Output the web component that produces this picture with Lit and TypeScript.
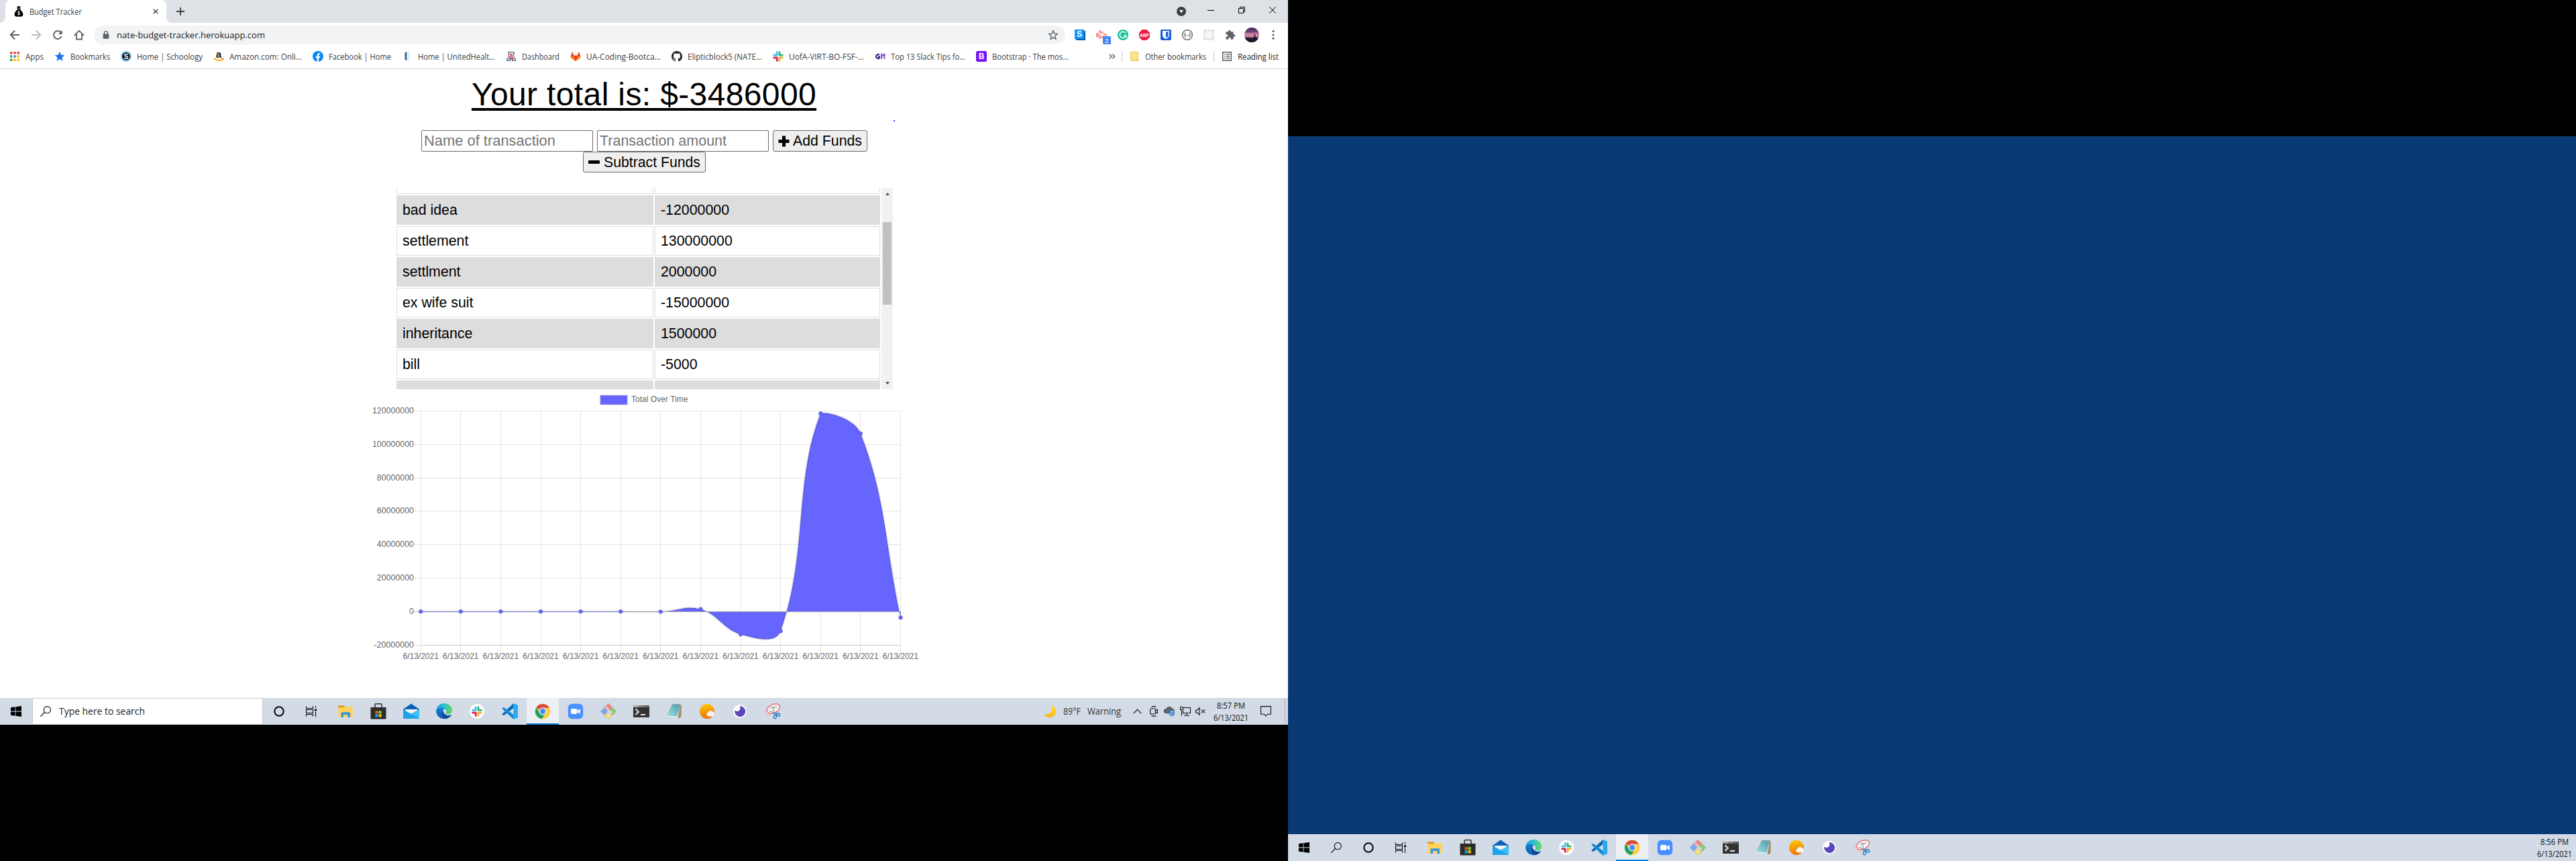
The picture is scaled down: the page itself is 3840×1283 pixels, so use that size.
import { LitElement, html, css, svg, nothing } from "lit";
import { customElement, property } from "lit/decorators.js";
import { classMap } from "lit/directives/class-map.js";

/* ---------- icon drawings: [viewBox, content] ---------- */
const slack = svg`
  <g fill="none" stroke-width="3.3" stroke-linecap="round">
    <path d="M6.2 1.8V6.2M1.8 6.2H6.2" stroke="#36c5f0"/>
    <path d="M9.9 1.8V6.2M9.9 6.2H14.2" stroke="#2eb67d"/>
    <path d="M9.9 9.9V14.2M9.9 9.9H14.2" stroke="#ecb22e"/>
    <path d="M6.2 9.9V14.2M1.8 9.9H6.2" stroke="#e01e5a"/>
  </g>
  <path d="M8 0V16M0 8H16M4.1 0V4.3H0M16 4.1H11.8V0M11.9 16V11.8H16M0 11.9H4.2V16" stroke="#fff" stroke-width=".7" fill="none"/>`;

const ICONS: Record<string, [string, unknown]> = {
  moneybag: ["0 0 16 16", svg`<path d="M5.2.6h5.6L9.6 3.4h-3.2z"/><rect x="5" y="3.6" width="6" height="1.2" rx=".5"/><path d="M6 5.2h4c2.2 1.8 4.4 4.6 4.4 7.4 0 2.2-1.2 3.2-3.2 3.2H4.8c-2 0-3.2-1-3.2-3.2C1.600 9.800 3.800 7 6 5.200z"/><path d="M9.600 8.900c-.5-.9-3.100-.8-3.100.5 0 1.500 3.200.7 3.200 2.300 0 1.400-2.700 1.500-3.300.4M8 7.500v6.200" stroke="#fff" stroke-width=".9" fill="none"/>`],
  close: ["0 0 8 8", svg`<path d="M.7.7l6.600 6.600M7.300.7L.7 7.300" stroke="#45494d" stroke-width="1.500"/>`],
  plus: ["0 0 12 12", svg`<path d="M6 0v12M0 6h12" stroke="#3c4043" stroke-width="1.800"/>`],
  back: ["0 0 16 16", svg`<path d="M15 8H2M8.200 1.500L1.800 8l6.400 6.500" stroke="#5f6368" stroke-width="2" fill="none"/>`],
  forward: ["0 0 16 16", svg`<path d="M1 8h13M7.800 1.500L14.200 8l-6.400 6.500" stroke="#bcbec1" stroke-width="2" fill="none"/>`],
  reload: ["0 0 16 16", svg`<path d="M13.600 10.200A6 6 0 1 1 12.600 4" stroke="#5f6368" stroke-width="2" fill="none"/><path d="M14.800 1v6H8.800z" fill="#5f6368"/>`],
  home: ["0 0 16 16", svg`<path d="M8 1.700L1.800 8H4v6.500h8V8h2.200z" stroke="#5f6368" stroke-width="1.800" fill="none"/>`],
  lock: ["0 0 10 12", svg`<path d="M2.500 5V3.200a2.500 2.500 0 0 1 5 0V5" stroke="#5f6368" stroke-width="1.300" fill="none"/><rect x=".6" y="4.500" width="8.800" height="7.300" rx="1" fill="#5f6368"/>`],
  star: ["0 0 16 16", svg`<path d="M8 1.800l1.800 4.300 4.600.4-3.500 3.100 1 4.600L8 11.800l-3.900 2.400 1-4.600-3.500-3.100 4.600-.4z" stroke="#5f6368" stroke-width="1.400" fill="none"/>`],
  bluestar: ["0 0 16 16", svg`<path d="M8 .8l2 5 5.400.4-4.100 3.500 1.300 5.300L8 12.100 3.400 15l1.300-5.300L.6 6.200 6 5.800z" fill="#1a73e8"/>`],
  apps: ["0 0 16 16", svg`<path d="M1 1h3.400v3.400H1zM6.300 1h3.400v3.400H6.300zM11.600 1H15v3.400h-3.400z" fill="#ea4335"/><path d="M1 6.300h3.400v3.400H1zM1 11.600h3.400V15H1z" fill="#34a853"/><path d="M6.300 6.300h3.400v3.400H6.300z" fill="#4285f4"/><path d="M11.600 6.300H15v3.400h-3.400zM6.300 11.600h3.400V15H6.300zM11.600 11.600H15V15h-3.400z" fill="#fbbc05"/>`],
  schoology: ["0 0 16 16", svg`<circle cx="8" cy="8" r="8" fill="#7fcdee"/><circle cx="8" cy="8" r="5.800" fill="#111"/><text x="8" y="11.500" font-size="10" font-weight="700" text-anchor="middle" fill="#fff">S</text>`],
  amazon: ["0 0 16 16", svg`<text x="8" y="9.800" font-size="15" font-weight="700" text-anchor="middle" fill="#111">a</text><path d="M.8 10.800c4 3.600 9 4 13 1.200" stroke="#f90" stroke-width="1.700" fill="none"/><path d="M11.500 11l3.700-.4-.8 3.800" stroke="#f90" stroke-width="1.200" fill="none"/>`],
  facebook: ["0 0 16 16", svg`<circle cx="8" cy="8" r="8" fill="#0d84f5"/><path d="M6.700 16v-5.500H4.700V8.100h2V6.400c0-2.100 1.200-3.200 3.100-3.200l1.500.1v2H10.200c-.9 0-1.200.5-1.200 1.200v1.600h2.200l-.4 2.400H9V16z" fill="#fff"/>`],
  united: ["0 0 16 16", svg`<path d="M4.600 2.500v9c0 1.600 1 2.400 2.600 2.700V1.200z" fill="#1448b0"/><path d="M7.600 1l3.800.8v10.700c0 1.200-1.500 1.800-3.800 2z" fill="#e3eaf6"/>`],
  arizona: ["0 0 16 16", svg`<g transform="translate(1.200 1.200) scale(.85)"><path d="M2.500 0h11v4.200h-1.200l1.900 7.200H16V16H9.200v-3H6.800v3H0v-4.600h1.800L3.700 4.200H2.500z" fill="#2b3d66"/><path d="M3.800 1.300h8.400v1.900h-1l2.200 9.300h1.200v2.200h-4v-3.400H5.400v3.400h-4v-2.200h1.200l2.200-9.300h-1z" fill="#f4f5f8"/><path d="M6.400 3.200h3.200l2.400 10H10.100L9.200 9.600H6.800L5.900 13.200H4z" fill="#d0485c"/><path d="M7.200 8L8 4.600 8.800 8z" fill="#fff"/></g>`],
  gitlab: ["0 0 16 16", svg`<path d="M8 15.300L.4 9.700 3 1.200l2.300 5.500h5.400L13 1.200l2.600 8.500z" fill="#fc6d26"/><path d="M8 15.300L5.200 6.700h5.600zM.7 8.800L3 1.200l2.300 5.500zM15.300 8.800L13 1.200l-2.300 5.500z" fill="#e24329"/><path d="M8 15.300L.4 9.700l.6-2zM8 15.300l7.600-5.600-.6-2z" fill="#fca326"/>`],
  github: ["0 0 16 16", svg`<path fill="#24292e" d="M8 0C3.580 0 0 3.580 0 8c0 3.540 2.290 6.530 5.470 7.590.4.070.55-.17.55-.38 0-.19-.01-.82-.01-1.490-2.010.37-2.530-.49-2.690-.94-.09-.23-.48-.94-.82-1.130-.28-.15-.68-.52-.01-.53.63-.01 1.080.58 1.230.82.72 1.210 1.870.87 2.330.66.07-.52.28-.87.51-1.070-1.780-.2-3.640-.89-3.640-3.950 0-.87.31-1.590.82-2.150-.08-.2-.36-1.020.08-2.120 0 0 .67-.21 2.200.82.64-.18 1.320-.27 2-.27s1.360.09 2 .27c1.530-1.040 2.200-.82 2.200-.82.44 1.100.16 1.920.08 2.120.51.56.82 1.270.82 2.150 0 3.070-1.870 3.750-3.650 3.950.29.25.54.73.54 1.480 0 1.070-.01 1.930-.01 2.200 0 .21.15.46.55.38A8.010 8.010 0 0 0 16 8c0-4.420-3.580-8-8-8z"/>`],
  slack: ["0 0 16 16", slack],
  gk: ["0 0 16 16", svg`<path d="M6.800 5.600A3 3 0 1 0 6.800 10.600V8.300H5" stroke="#43217f" stroke-width="2.200" fill="none"/><path d="M10 3.500V12M10 8.300L13 5.500M14.200 3.500V10.500c0 .6.500.9 1.300.9M12.800 6.200H16" stroke="#8a4fd8" stroke-width="1.900" fill="none"/>`],
  bootstrap: ["0 0 16 16", svg`<rect width="16" height="16" rx="2.500" fill="#7413f5"/><text x="8" y="12.300" font-size="12" font-weight="700" text-anchor="middle" fill="#fff">B</text>`],
  more: ["0 0 10 8", svg`<path d="M1 .8L4 4 1 7.200M5.500.8L8.500 4l-3 3.200" stroke="#5f6368" stroke-width="1.600" fill="none"/>`],
  folder: ["0 0 12 14", svg`<path d="M.5.500h10.800v9.500l.4.500v3H.5z" fill="#fde293" stroke="#f0c445"/><path d="M9.500 13.500V10.200" stroke="#f0c445"/>`],
  reading: ["0 0 14 14", svg`<rect x=".8" y=".8" width="12.400" height="12.400" fill="#fff" stroke="#5f6368" stroke-width="1.600"/><path d="M3 4.200h1.600M6 4.200h5M3 7h1.600M6 7h5M3 9.800h1.600M6 9.800h5" stroke="#5f6368" stroke-width="1.500"/>`],
  sblue: ["0 0 16 16", svg`<path d="M2 2h14v14H3l-2-2z" fill="#0a5c9e"/><rect width="14" height="14" fill="#0c95ff"/><text x="7" y="11.300" font-size="12" font-weight="700" text-anchor="middle" fill="#fff">S</text>`],
  record: ["0 0 16 16", svg`<path d="M0 5.200h3.600v6.300H0z" fill="#ff8a85"/><path d="M5.500 2.500L15 8l-9.500 5z" fill="none" stroke="#ff8a85" stroke-width="2.200" stroke-dasharray="6 1.200"/><rect x="10" y="10" width="12" height="12" rx="1.500" fill="#4285f4"/><text x="16" y="19.500" font-size="9.500" text-anchor="middle" fill="#fff">2</text>`],
  grammarly: ["0 0 16 16", svg`<circle cx="8" cy="8" r="8" fill="#15c39a"/><path d="M12 5.600A4.600 4.600 0 1 0 12.300 9.200H9" stroke="#fff" stroke-width="1.500" fill="none"/><path d="M12.800 8.500v3.200" stroke="#fff" stroke-width="1.200"/>`],
  abp: ["0 0 16 16", svg`<path d="M4.700 0h6.600L16 4.700v6.600L11.300 16H4.700L0 11.300V4.700z" fill="#ed1e45"/><text x="8" y="10.800" font-size="7.500" font-weight="700" text-anchor="middle" fill="#fff" textLength="14" lengthAdjust="spacingAndGlyphs">ABP</text>`],
  bitwarden: ["0 0 16 16", svg`<rect width="16" height="16" rx="2" fill="#175ddc"/><path d="M3 2h10v6.500c0 3-2.800 4.600-5 5.700-2.200-1.100-5-2.700-5-5.700z" fill="#fff"/><path d="M8 3.500h3.600v5c0 2-1.900 3.100-3.600 4.100z" fill="#175ddc"/>`],
  braces: ["0 0 16 16", svg`<circle cx="8" cy="8" r="7.400" fill="#fff" stroke="#555" stroke-width="1.200"/><path d="M5.500 4.800c-2 0-.5 2.600-2 3.200 1.500.6 0 3.200 2 3.200M10.500 4.800c2 0 .5 2.600 2 3.200-1.500.6 0 3.200-2 3.200" stroke="#555" stroke-width="1.100" fill="none"/><path d="M5.800 8.500h4.400" stroke="#555" stroke-dasharray="1 .7"/>`],
  react: ["0 0 16 16", svg`<rect width="16" height="16" fill="#e2e2e2"/><g fill="none" stroke="#fff" stroke-width="1.100"><ellipse cx="8" cy="8" rx="6.500" ry="2.500"/><ellipse cx="8" cy="8" rx="6.500" ry="2.500" transform="rotate(60 8 8)"/><ellipse cx="8" cy="8" rx="6.500" ry="2.500" transform="rotate(120 8 8)"/></g><circle cx="8" cy="8" r="1.300" fill="#fff"/>`],
  puzzle: ["0 0 24 24", svg`<path fill="#5f6368" d="M20.500 11H19V7c0-1.100-.9-2-2-2h-4V3.500a2.500 2.500 0 0 0-5 0V5H4c-1.100 0-2 .9-2 2v3.800h1.500c1.500 0 2.700 1.200 2.700 2.700S5 16.200 3.500 16.200H2V20c0 1.100.9 2 2 2h3.800v-1.500c0-1.500 1.200-2.700 2.700-2.700s2.700 1.200 2.700 2.700V22H17c1.100 0 2-.9 2-2v-4h1.500a2.500 2.500 0 0 0 0-5z"/>`],
  avatar: ["0 0 22 22", svg`<defs><linearGradient id="sky" x2="0" y2="1"><stop stop-color="#3a2350"/><stop offset=".3" stop-color="#84508c"/><stop offset=".5" stop-color="#dc93a8"/><stop offset=".66" stop-color="#a86a8e"/><stop offset=".8" stop-color="#3a2745"/><stop offset="1" stop-color="#1a1228"/></linearGradient></defs><circle cx="11" cy="11" r="11" fill="url(#sky)"/><path d="M3 5c4-2 8 1 12-1l4 1.500c-5 2-10 .5-16 2z" fill="#55306b" opacity=".6"/><path d="M.8 15.500c3-1.500 5-.5 8 0 3 .5 5-.8 6-1.500l.2-4h1.200l.3 4 3.900 2.500C18.500 20 15 22 11 22S3 20 .8 15.500z" fill="#20162a"/>`],
  dots: ["0 0 4 16", svg`<g fill="#5f6368"><circle cx="2" cy="2.500" r="1.600"/><circle cx="2" cy="8" r="1.600"/><circle cx="2" cy="13.200" r="1.600"/></g>`],
  badge: ["0 0 14 14", svg`<circle cx="7" cy="7" r="7" fill="#3c4043"/><path d="M3.900 5h6.200L7 9.500z" fill="#fff"/>`],
  min: ["0 0 10 10", svg`<path d="M0 5.500h10" stroke="#000"/>`],
  restore: ["0 0 10 10", svg`<path d="M.5 2.500h7v7h-7zM2.500 2.500v-2h7v7h-2" stroke="#000" fill="none"/>`],
  x: ["0 0 10 10", svg`<path d="M.3.3l9.400 9.400M9.700.3L.3 9.700" stroke="#000"/>`],
  win: ["0 0 16 16", svg`<path d="M0 2.200L6.600 1.300v6.300H0zM7.400 1.200L16 0v7.600H7.400zM0 8.400h6.600v6.300L0 13.800zM7.400 8.400H16V16l-8.600-1.200z"/>`],
  search: ["0 0 16 16", svg`<circle cx="10.300" cy="5.700" r="5.100" fill="none" stroke="#111" stroke-width="1.100"/><path d="M6.700 9.300L.4 15.600" stroke="#111" stroke-width="1.300"/>`],
  cortana: ["0 0 16 16", svg`<circle cx="8" cy="8" r="6.700" fill="none" stroke="#0a0a0a" stroke-width="2"/>`],
  taskview: ["0 0 16 16", svg`<path d="M.5.500V3.500H10.500V.500M.5 15.500V12.500H10.500V15.500M.5 5.500h10v5H.5zM14.500 0V2.500M14.500 9V16" stroke="#000" fill="none" stroke-width="1.100"/><rect x="13" y="4.500" width="3" height="3"/>`],
  explorer: ["0 0 24 24", svg`<path d="M1.300 3.500h8.500l1.500 2.200-1.500 1.500H1.300z" fill="#dd9a0e"/><path d="M1.300 6.200h9l1.500-1h10.900v15.500H1.300z" fill="#fdd35c"/><path d="M5.500 21v-6.300c0-1 .6-1.500 1.500-1.500h10.500c1 0 1.500.6 1.500 1.500V21h-3.600v-4H9v4z" fill="#3a97dc"/>`],
  store: ["0 0 24 24", svg`<path d="M7 7V2c0-.9.500-1.300 1.300-1.300h7.400c.8 0 1.300.4 1.300 1.300v5" stroke="#333" stroke-width="1.600" fill="none"/><path d="M.5 6h23v16.600c0 .6-.5 1-1 1h-21c-.6 0-1-.4-1-1z" fill="#2c2c2c"/><path d="M7.500 11.200h4.200v4.200H7.500z" fill="#f1511b"/><path d="M12.500 11.200h4.200v4.200h-4.200z" fill="#80cc28"/><path d="M7.500 16.200h4.200v4.200H7.500z" fill="#00adef"/><path d="M12.500 16.200h4.200v4.200h-4.200z" fill="#fbbc09"/>`],
  mail: ["0 0 24 24", svg`<path d="M0 9L12 .6 24 9v4H0z" fill="#0b62b8"/><path d="M3 9h18v8H3z" fill="#f4f4f4"/><path d="M0 9.300l12 6.500 12-6.500V23H0z" fill="#1fa2ea"/><path d="M12 15.800L24 9.300V23z" fill="#3bc0f5"/>`],
  edge: ["0 0 24 24", svg`<defs><linearGradient id="eg" x1="0" y1=".4" x2="1" y2=".5"><stop stop-color="#1e9be0"/><stop offset=".5" stop-color="#2fc2d0"/><stop offset="1" stop-color="#63dc57"/></linearGradient><linearGradient id="eb" x1="0" y1="0" x2="0" y2="1"><stop stop-color="#1580d2"/><stop offset="1" stop-color="#0d5bb4"/></linearGradient></defs><path d="M.2 11C.8 4.500 6 0 12.200 0 18.800 0 24 4.600 24 10.300c0 4-2.800 6-5.800 6-2.300 0-4-.7-4-1.600 0-.6.900-1.100.9-2.700 0-2.600-2.700-4.800-6.300-4.800C4.800 7.200 1.500 8.800.2 11z" fill="url(#eg)"/><path d="M0 12c0-3 3.600-5.300 8-5.300 2.200 0 4.200.7 5.400 2C10 8.500 8.400 11.500 8.400 14c0 4 4 8.500 9.200 7.800A12 12 0 0 1 0 12z" fill="url(#eb)"/><path d="M8.400 14c0-2 .8-3.700 2.200-4.600-.6 4.600 3 8.600 8 8.600 1.500 0 2.600-.3 3.800-.8.400-.2.700 0 .4.500-2 3.100-5.500 5.300-8.800 5.600-3.300-.8-5.600-5.200-5.600-9.300z" fill="#0c4a94"/>`],
  slackapp: ["0 0 24 24", svg`<circle cx="12" cy="12" r="11.500" fill="#fff" stroke="#c9ccd2" stroke-width=".8"/><g transform="translate(4 4)">${slack}</g>`],
  vscode: ["0 0 24 24", svg`<path d="M17.500 0L24 2.800v18.400L17.500 24z" fill="#29a9f2"/><path d="M17.500 0v7L2.800 18.200.2 16.300z" fill="#0a6cb8"/><path d="M17.500 24v-7L2.800 5.800.2 7.700z" fill="#1489d8"/>`],
  chrome: ["0 0 24 24", svg`<circle cx="12" cy="12" r="11.200" fill="#ffcd42"/><path d="M12 12L2.300 6.400A11.200 11.200 0 0 1 21.900 7H12z" fill="#da4e42"/><path d="M2.300 6.400A11.200 11.200 0 0 0 10.800 23.200L16.500 14.500 12 12 7.800 14.500z" fill="#1da462"/><path d="M12 6.800H21.800A11.200 11.200 0 0 1 10.800 23.200L16.600 14.500z" fill="#ffcd42"/><circle cx="12" cy="12" r="5.400" fill="#fff"/><circle cx="12" cy="12" r="4.200" fill="#4a8af4"/>`],
  zoom: ["0 0 24 24", svg`<rect x=".8" y=".8" width="22.400" height="22.400" rx="6" fill="#4a8fff"/><rect x="5" y="8" width="9.500" height="8" rx="2" fill="#fff"/><path d="M15 10.800L18.800 8v8L15 13.200z" fill="#fff"/>`],
  git: ["0 0 24 24", svg`<g stroke="#a5a5a5" stroke-width=".6"><path d="M12 .3l5.800 5.400-3.500 4.200h-4.600L6.200 5.700z" fill="#f58080"/><path d="M5.700 6.300l5 5.700-5 5.700L.3 12z" fill="#7da7f5"/><path d="M18.300 6.300l-5 5.700 5 5.700L23.700 12z" fill="#85cf6c"/><path d="M12 23.700l-5.800-5.400L9.700 14h4.600l3.500 4.300z" fill="#fbe06a"/></g><path d="M8 5l4 4.500V18M12 11l4.500 2.500" stroke="#d9d9d9" stroke-width="2" fill="none"/><circle cx="12" cy="18" r="1.700" fill="#ddd"/><circle cx="16.500" cy="13.500" r="1.700" fill="#ddd"/>`],
  terminal: ["0 0 24 24", svg`<rect y="3" width="24" height="18" fill="#333"/><path d="M0 3h8v3H0z" fill="#a8a8a8"/><path d="M8 3h8v3H8z" fill="#7f7f7f"/><path d="M16 3h8v3h-8z" fill="#666"/><path d="M3.500 8.500l4.200 4.200L3.500 17" stroke="#ccc" stroke-width="2.500" fill="none"/><path d="M11 17h7" stroke="#fff" stroke-width="1.800"/>`],
  notepad: ["0 0 24 24", svg`<defs><linearGradient id="np" x1="0" y1="1" x2="1" y2="0"><stop stop-color="#a9dbe2"/><stop offset=".45" stop-color="#7cc3ce"/><stop offset="1" stop-color="#4a9dae"/></linearGradient></defs><path d="M20.500 2l2.300 1L22.300 20.500l-3.300 1.800-2-1.300z" fill="#a48c62"/><path d="M21 2.200L17.500 21 .7 19.600 1 18.500z" fill="#f4f7f7"/><path d="M8.600 2.200H21L16.600 19.800.7 18.600z" fill="url(#np)"/><path d="M9 1.700h12" stroke="#8b8f90" stroke-width="1.200"/>`],
  weather: ["0 0 24 24", svg`<defs><linearGradient id="sun" x1=".4" y1="0" x2=".6" y2="1"><stop stop-color="#fdc800"/><stop offset="1" stop-color="#ee6c09"/></linearGradient></defs><circle cx="12" cy="12" r="11" fill="url(#sun)"/><path d="M14 19.500a3 3 0 0 1-.3-5.900 4 4 0 0 1 7.200-.8 3.500 3.500 0 0 1-.3 6.700z" fill="#f6f4f2"/>`],
  insomnia: ["0 0 24 24", svg`<circle cx="12" cy="12" r="10" fill="#fff"/><path d="M11.300 4.200A8 8 0 1 1 4.400 10.500 4.200 4.200 0 0 0 11.300 4.200z" fill="#5a47bb"/>`],
  snip: ["0 0 24 24", svg`<g fill="none"><ellipse cx="10" cy="11" rx="10" ry="5.600" transform="rotate(-22 10 11)" fill="#ecd9dd" stroke="#ecb4b6" stroke-width=".9"/><ellipse cx="13" cy="8" rx="10.300" ry="6.300" transform="rotate(-24 13 8)" fill="#f0eef1" stroke="#e2605f" stroke-width="1.200"/><path d="M6.500 11.500l12 4M12.800 5l.5 11M9 7l9-2" stroke="#8c8c8c" stroke-width="1"/><ellipse cx="15.500" cy="20" rx="2" ry="2.800" stroke="#2686cb" stroke-width="1.500" transform="rotate(14 15.500 20)"/><ellipse cx="20.500" cy="17" rx="2.400" ry="1.900" stroke="#2686cb" stroke-width="1.500" transform="rotate(30 20.500 17)"/><path d="M13.500 14.500l2.500 2.500 2-2.500" stroke="#2686cb" stroke-width="1.500"/></g>`],
  moon: ["0 0 18 18", svg`<defs><linearGradient id="mn" x2="0" y2="1"><stop stop-color="#ffe32e"/><stop offset="1" stop-color="#fbb414"/></linearGradient></defs><path d="M11.300.2C15.600 1.600 18 5 18 9a9 9 0 0 1-9 9C5.300 18 2 16.500.2 13.500c3.800.6 7.300-.3 9.600-2.700 2.500-2.700 3-6.600 1.500-10.600z" fill="url(#mn)"/>`],
  chevron: ["0 0 13 8", svg`<path d="M.7 7.200L6.500 1.400l5.800 5.800" stroke="#111" stroke-width="1.200" fill="none"/>`],
  camera: ["0 0 12 16", svg`<g fill="none" stroke="#111" stroke-width="1.100"><path d="M2.500 1.500c2-1 5-1 7 0M2.500 14.500c2 1 5 1 7 0"/><rect x=".6" y="4" width="7.800" height="8" rx="1.500"/><path d="M8.500 7l2.900-1.700v5.400L8.500 9"/></g>`],
  onedrive: ["0 0 16 14", svg`<path d="M3 9.500a3 3 0 0 1 .6-6A4.600 4.600 0 0 1 12 3c2 .2 3 1.500 3 3.500v3z" fill="#666" stroke="#222" stroke-width=".8"/><circle cx="11.500" cy="9.500" r="4.500" fill="#1c72c8"/><path d="M9 9a2.600 2.600 0 0 1 4.800-.8M14 10a2.600 2.600 0 0 1-4.800.8M14 6.500v2h-2M9 12.500v-2h2" stroke="#fff" stroke-width=".9" fill="none"/>`],
  network: ["0 0 16 14", svg`<path d="M5.500 1.500h10v8h-11V6M10 9.500v3.500M6 13.300h8M2.500 5.500v8" stroke="#111" fill="none" stroke-width="1.100"/><rect x=".6" y=".6" width="4" height="4" fill="none" stroke="#111" stroke-width="1.100"/>`],
  sound: ["0 0 15 12", svg`<path d="M.6 4h2.200L6 .9v10.200L2.800 8H.6zM9 3.300l5.400 5.400M14.400 3.300L9 8.700" stroke="#111" fill="none" stroke-width="1.100"/>`],
  notice: ["0 0 16 16", svg`<path d="M.6.6h14.800v11.600h-4.900L8 14.900l-2.500-2.700H.6z" stroke="#111" fill="none" stroke-width="1.100"/>`],
  fplus: ["0 0 17 17", svg`<path d="M6 .5h5V6h5.500v5H11v5.500H6V11H.5V6H6z"/>`],
  fminus: ["0 0 17 17", svg`<rect x="0" y="6" width="17" height="5" rx=".8"/>`],
};

const icon = (name: string, w = 16, h = w) =>
  html`<svg class="icon" width=${w} height=${h} viewBox=${ICONS[name][0]} font-family="Liberation Sans, Arial, sans-serif">${ICONS[name][1]}</svg>`;

const iconStyles = css`
  *, *::before { box-sizing: border-box; }
  .icon { display: block; flex: none; overflow: visible; }
`;

/* A single line of text that is condensed or widened to a given width. */
@customElement("ui-label")
export class UiLabel extends LitElement {
  @property() text = "";
  @property({ type: Number }) w = 0;
  static styles = css`
    :host { display: block; flex: none; white-space: pre; }
    .run { display: inline-block; transform-origin: 0 50%; }
  `;
  private fit() {
    const run = this.renderRoot.querySelector<HTMLElement>(".run");
    if (!run) return;
    run.style.transform = "none";
    const natural = run.getBoundingClientRect().width;
    if (natural && this.w) run.style.transform = `scaleX(${this.w / natural})`;
  }
  updated() {
    this.style.width = `${this.w}px`;
    this.fit();
    document.fonts.ready.then(() => this.fit());
  }
  render() {
    return html`<span class="run">${this.text}</span>`;
  }
}

const label = (text: string, w: number) => html`<ui-label .text=${text} .w=${w}></ui-label>`;

/* ---------- browser chrome ---------- */
const BOOKMARKS: [string, string, number][] = [
  ["apps", "Apps", 27],
  ["bluestar", "Bookmarks", 59],
  ["schoology", "Home | Schoology", 98],
  ["amazon", "Amazon.com: Onli...", 108],
  ["facebook", "Facebook | Home", 93],
  ["united", "Home | UnitedHealt...", 115],
  ["arizona", "Dashboard", 56],
  ["gitlab", "UA-Coding-Bootca...", 111],
  ["github", "Elipticblock5 (NATE...", 111],
  ["slack", "UofA-VIRT-BO-FSF-...", 112],
  ["gk", "Top 13 Slack Tips fo...", 111],
  ["bootstrap", "Bootstrap · The mos...", 114],
];
const EXTENSIONS = ["sblue", "record", "grammarly", "abp", "bitwarden", "braces", "react"];

@customElement("browser-chrome")
export class BrowserChrome extends LitElement {
  static styles = [iconStyles, css`
    :host { display: block; font: 11.700px/16px "Open Sans", "Noto Sans", sans-serif; color: #3c4043; }
    .tabs { display: flex; height: 34px; background: #dee1e6; padding-left: 8px; }
    .tab { position: relative; display: flex; align-items: center; width: 240px; height: 34px; padding: 0 12px; background: #fff; border-radius: 8px 8px 0 0; }
    .tab::before, .tab::after { content: ""; position: absolute; bottom: 0; width: 8px; height: 8px; }
    .tab::before { left: -8px; background: radial-gradient(circle at 0 0, #dee1e6 7.500px, #fff 8px); }
    .tab::after { right: -8px; background: radial-gradient(circle at 100% 0, #dee1e6 7.500px, #fff 8px); }
    .tab ui-label { margin-left: 8px; }
    .tab .end { margin-left: auto; }
    .new { display: flex; align-items: center; margin-left: 15px; }
    .window { display: flex; align-items: center; margin-left: auto; padding: 0 18px 5px 0; }
    .window .badge { margin: 5px 32px 0 0; }
    .window .ctl { width: 10px; margin-right: 36px; }
    .window .ctl.last { margin-right: 0; }
    .toolbar { display: flex; align-items: center; height: 36px; padding-left: 14px; background: #fff; }
    .nav { display: flex; gap: 16px; margin-right: 14px; }
    .pill { display: flex; align-items: center; width: 1448px; height: 28px; padding: 0 10px 0 13px; background: #f1f3f4; border-radius: 14px; color: #202124; font-size: 13.500px; line-height: 18px; }
    .pill ui-label { margin-left: 11px; }
    .pill .end { margin-left: auto; }
    .ext { display: flex; gap: 16px; margin-left: 14px; }
    .puzzle { margin-left: 16px; }
    .avatar { margin-left: 13px; }
    .dots { margin-left: 19px; }
    .bookmarks { display: flex; align-items: center; height: 33px; padding: 0 14px 4px; background: #fff; border-bottom: 1px solid #d9dbde; gap: 16px; }
    .item { display: flex; align-items: center; gap: 8px; height: 16px; flex: none; }
    .tail { display: flex; align-items: center; margin-left: auto; flex: none; }
    .rule { width: 1px; height: 16px; background: #c6c9cd; }
    .tail .r1 { margin-left: 9px; }
    .tail .f { margin-left: 12px; }
    .tail .ob { margin-left: 10px; }
    .tail .r2 { margin-left: 11px; }
    .tail .rl { margin-left: 9px; color: #202124; }
  `];
  render() {
    return html`
      <div class="tabs">
        <div class="tab">${icon("moneybag")}${label("Budget Tracker", 78)}<span class="end">${icon("close", 8)}</span></div>
        <div class="new">${icon("plus", 12)}</div>
        <div class="window">
          <span class="badge">${icon("badge", 14)}</span>
          <span class="ctl">${icon("min", 10)}</span><span class="ctl">${icon("restore", 10)}</span><span class="ctl last">${icon("x", 10)}</span>
        </div>
      </div>
      <div class="toolbar">
        <div class="nav">${icon("back")}${icon("forward")}${icon("reload")}${icon("home")}</div>
        <div class="pill">${icon("lock", 10, 12)}${label("nate-budget-tracker.herokuapp.com", 221)}<span class="end">${icon("star")}</span></div>
        <div class="ext">${EXTENSIONS.map((n) => icon(n))}</div>
        <span class="puzzle">${icon("puzzle")}</span>
        <span class="avatar">${icon("avatar", 22)}</span>
        <span class="dots">${icon("dots", 4, 16)}</span>
      </div>
      <div class="bookmarks">
        ${BOOKMARKS.map(([i, t, w]) => html`<div class="item">${icon(i)}${label(t, w)}</div>`)}
        <div class="tail">
          ${icon("more", 10, 8)}
          <i class="rule r1"></i>
          <span class="f">${icon("folder", 12, 14)}</span>
          <span class="ob">${label("Other bookmarks", 91)}</span>
          <i class="rule r2"></i>
          <span class="f">${icon("reading", 14)}</span>
          <span class="rl">${label("Reading list", 61)}</span>
        </div>
      </div>`;
  }
}

/* ---------- chart ---------- */
const TOTALS = [120000, 120000, 120000, 100000, 120000, 80000, -20000, 1500000, -13500000, -11500000, 118500000, 106500000, -3486000];

@customElement("total-chart")
export class TotalChart extends LitElement {
  static styles = css`
    :host { display: block; }
    .plot { display: block; font: 12px "Liberation Sans", Arial, sans-serif; }
    .tick { fill: #666; }
  `;
  render() {
    const left = 77.2, right = 792.5, top = 32.4, bottom = 381.4;
    const step = (right - left) / 12;
    const y = (v: number) => top + ((120e6 - v) / 140e6) * (bottom - top);
    const pts = TOTALS.map((v, i) => ({ x: left + i * step, y: y(v) }));
    const cap = (v: number) => Math.max(top, Math.min(bottom, v));
    const ctl = pts.map((c, i) => {
      const p = pts[i - 1] ?? c, n = pts[i + 1] ?? c;
      const a = Math.hypot(c.x - p.x, c.y - p.y), b = Math.hypot(n.x - c.x, n.y - c.y);
      const fa = (0.4 * a) / (a + b), fb = (0.4 * b) / (a + b);
      return {
        px: c.x - fa * (n.x - p.x), py: cap(c.y - fa * (n.y - p.y)),
        nx: c.x + fb * (n.x - p.x), ny: cap(c.y + fb * (n.y - p.y)),
      };
    });
    const line = pts.map((p, i) => i === 0 ? `M${p.x} ${p.y}`
      : `C${ctl[i - 1].nx} ${ctl[i - 1].ny} ${ctl[i].px} ${ctl[i].py} ${p.x} ${p.y}`).join("");
    const rows = [0, 1, 2, 3, 4, 5, 6, 7];
    const snap = (v: number) => Math.floor(v) + 0.5;
    const tickWidth = (v: number) => String(v).length * 6.9 - (v < 0 ? 2.4 : 0);
    return html`<svg class="plot" width="820" height="420" viewBox="0 0 820 420">
      <rect x="345" y="9.500" width="40" height="13" fill="#6666ff" stroke="#000" stroke-opacity=".1" stroke-width="3"></rect>
      <rect x="345" y="9.500" width="40" height="13" fill="#6666ff"></rect>
      <text class="tick" x="391" y="19" textLength="84.500" lengthAdjust="spacingAndGlyphs">Total Over Time</text>
      ${rows.map((r) => {
        const v = 120e6 - r * 20e6, gy = snap(y(v));
        return svg`<path d="M${left - 10} ${gy}H${right}" stroke="#000" stroke-opacity=${v === 0 ? 0.25 : 0.1}></path>
          <text class="tick" x="67" y=${gy + 3} text-anchor="end" textLength=${tickWidth(v)} lengthAdjust="spacingAndGlyphs">${v}</text>`;
      })}
      ${pts.map((p) => svg`<path d="M${snap(p.x)} ${top}V${bottom + 10}" stroke="#000" stroke-opacity=".1"></path>
        <text class="tick" x=${p.x} y="402" text-anchor="middle">6/13/2021</text>`)}
      <path d="M${left} ${snap(bottom)}H${right}" stroke="#000" stroke-opacity=".1"></path>
      <path d="${line}L${right} ${y(0)}L${left} ${y(0)}Z" fill="#6666ff"></path>
      <path d=${line} fill="none" stroke="#000" stroke-opacity=".1" stroke-width="3"></path>
      <path d="M${left} ${snap(y(0))}H${left + step * 5}" stroke="#7b7bd8" stroke-width="1"></path>
      <path d="M${left + step * 5} ${snap(y(0))}H${right}" stroke="#9c9cae" stroke-width="1"></path>
      ${pts.map((p) => svg`<circle cx=${p.x} cy=${p.y} r="3" fill="#6666ff" stroke="#000" stroke-opacity=".1"></circle>`)}
    </svg>`;
  }
}

/* ---------- budget page ---------- */
const ROWS: [string, string][] = [
  ["bad idea", "-12000000"], ["settlement", "130000000"], ["settlment", "2000000"],
  ["ex wife suit", "-15000000"], ["inheritance", "1500000"], ["bill", "-5000"], ["", ""],
];

@customElement("budget-page")
export class BudgetPage extends LitElement {
  static styles = [iconStyles, css`
    :host { display: flex; flex-direction: column; align-items: center; flex: 1; min-height: 0; background: #fff; color: #000; font: 21.333px/24px "Liberation Sans", Arial, sans-serif; overflow: hidden; }
    .total { position: relative; margin: 10px 0 0; height: 55px; font-size: 48px; line-height: 55px; letter-spacing: .37px; text-decoration: underline; text-decoration-thickness: 4px; text-underline-offset: 4px; }
    .dot { position: absolute; left: 629px; top: 66px; width: 2px; height: 2px; background: #33e; }
    .form { display: flex; gap: 6px; margin: 26px 0 0 1px; }
    .field { width: 256px; height: 32px; padding: 3px; border: 1px solid #6b6b6b; border-radius: 2px; color: #757575; background: #fff; }
    .btn { display: flex; align-items: center; height: 32px; padding: 0 7px; gap: 5px; background: #efefef; border: 1px solid #6b6b6b; border-radius: 3px; }
    .btn.wide { gap: 6px; margin-left: 1px; height: 31px; }
    .scroller { display: flex; width: 740px; height: 300px; margin: 23px 0 0 2px; overflow: hidden; }
    .grid { display: grid; grid-template-columns: 383px 336px; grid-auto-rows: 44px; gap: 2px; width: 723px; margin-top: -35px; }
    .cell { padding: 8px; line-height: 26px; border: 1px solid #ddd; }
    .cell.shade { background: #ddd; }
    .bar { display: flex; flex-direction: column; align-items: center; width: 17px; height: 300px; background: #f1f1f1; padding: 7px 0; }
    .up, .down { border: 3.500px solid transparent; }
    .up { border-top: 0; border-bottom: 4px solid #505050; }
    .down { border-bottom: 0; border-top: 4px solid #505050; margin-top: auto; }
    .thumb { width: 13px; height: 123px; margin-top: 40px; background: #c1c1c1; }
    .chart { width: 820px; }
  `];
  render() {
    return html`
      <div class="total">Your total is: $-3486000<i class="dot"></i></div>
      <div class="form">
        <div class="field">${label("Name of transaction", 196)}</div>
        <div class="field">${label("Transaction amount", 189)}</div>
        <div class="btn">${icon("fplus", 17)}${label("Add Funds", 103)}</div>
      </div>
      <div class="btn wide">${icon("fminus", 17)}${label("Subtract Funds", 144)}</div>
      <div class="scroller">
        <div class="grid">
          <div class="cell"></div><div class="cell"></div>
          ${ROWS.map((r, i) => r.map((c) => html`<div class=${classMap({ cell: true, shade: i % 2 === 0 })}>${c || nothing}</div>`))}
        </div>
        <div class="bar"><i class="up"></i><i class="thumb"></i><i class="down"></i></div>
      </div>
      <div class="chart"><total-chart></total-chart></div>`;
  }
}

/* ---------- taskbar ---------- */
const APPS = ["explorer", "store", "mail", "edge", "slackapp", "vscode", "chrome", "zoom", "git", "terminal", "notepad", "weather", "insomnia", "snip"];

@customElement("task-bar")
export class TaskBar extends LitElement {
  @property({ type: Boolean }) primary = false;
  @property() time = "";
  static styles = [iconStyles, css`
    :host { display: flex; flex: none; height: 40px; background: #d3dbe7; color: #222; font: 11.700px/18px "Open Sans", "Noto Sans", sans-serif; }
    .slot { display: flex; align-items: center; justify-content: center; width: 48px; height: 40px; }
    .search { display: flex; align-items: center; width: 344px; height: 40px; padding-left: 11px; gap: 12px; background: #fff; border: 1px solid #c8cacd; font-size: 14.500px; }
    .apps { display: flex; gap: 1px; margin-left: 3px; }
    .active { background: #ecf0f5; border-bottom: 2px solid #0078d7; padding-top: 2px; }
    .tray { display: flex; align-items: center; margin-left: auto; }
    .weather { display: flex; align-items: center; gap: 10px; margin: 0 18px 0 11px; font-size: 14px; color: #333; }
    .glyphs { display: flex; align-items: center; gap: 9px; margin-left: 12px; }
    .glyphs.near { gap: 7px; margin-left: 8px; }
    .clock { display: flex; flex-direction: column; align-items: center; width: 52px; color: #111; }
    .primary-clock { margin: 0 18px 0 12px; }
    .show { width: 5px; height: 40px; margin-left: 20px; border-left: 1px solid #a8afba; }
    .side-clock { margin: 0 6px 0 auto; justify-content: center; }
  `];
  render() {
    const clock = (cls: string) => html`<div class="clock ${cls}">${label(this.time, 42)}${label("6/13/2021", 52)}</div>`;
    return html`
      <div class="slot">${icon("win")}</div>
      ${this.primary
        ? html`<div class="search">${icon("search")}${label("Type here to search", 128)}</div>`
        : html`<div class="slot">${icon("search")}</div>`}
      <div class="slot">${icon("cortana")}</div>
      <div class="slot">${icon("taskview")}</div>
      <div class="apps">${APPS.map((a) => html`<div class=${classMap({ slot: true, active: a === "chrome" })}>${icon(a, 24)}</div>`)}</div>
      ${this.primary
        ? html`<div class="tray">
            ${icon("moon", 18)}
            <div class="weather">${label("89°F", 26)}${label("Warning", 50)}</div>
            ${icon("chevron", 13, 8)}
            <div class="glyphs">${icon("camera", 12, 16)}${icon("onedrive", 16, 14)}</div>
            <div class="glyphs near">${icon("network", 16, 14)}${icon("sound", 15, 12)}</div>
            ${clock("primary-clock")}
            ${icon("notice", 16)}
            <i class="show"></i>
          </div>`
        : clock("side-clock")}`;
  }
}

@customElement("app-root")
export class AppRoot extends LitElement {
  static styles = css`
    :host { display: grid; grid-template-columns: 1920px 1920px; width: 3840px; height: 1283px; background: #000; }
    .screen { display: flex; flex-direction: column; height: 1080px; overflow: hidden; }
    .second { align-self: end; background: #0a3a75; }
    .fill { flex: 1; }
  `;
  render() {
    return html`
      <main class="screen">
        <browser-chrome></browser-chrome>
        <budget-page></budget-page>
        <task-bar primary time="8:57 PM"></task-bar>
      </main>
      <section class="screen second">
        <div class="fill"></div>
        <task-bar time="8:56 PM"></task-bar>
      </section>`;
  }
}
